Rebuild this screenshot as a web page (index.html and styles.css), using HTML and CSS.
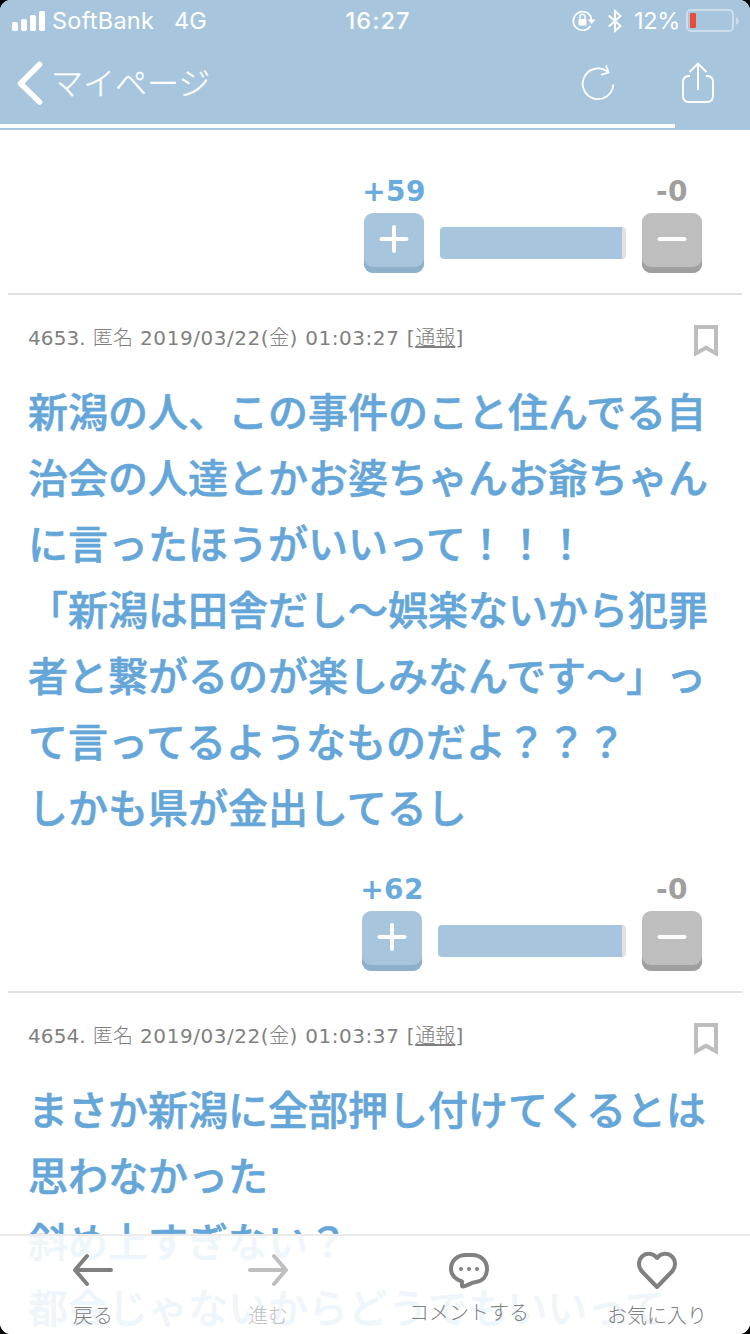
FILE: index.html
```html
<!DOCTYPE html>
<html lang="ja">
<head>
<meta charset="utf-8">
<title>マイページ</title>
<link rel="stylesheet" href="styles.css">
</head>
<body>
<div class="screen">
  <header class="header">
    <div class="status">
      <div class="status-left">
        <svg class="signal" width="34" height="20" viewBox="0 0 34 20" fill="#fff"><rect x="0" y="11" width="6" height="9" rx="1.7"/><rect x="9" y="8" width="6" height="12" rx="1.7"/><rect x="18" y="4" width="6" height="16" rx="1.7"/><rect x="27" y="0" width="6" height="20" rx="1.7"/></svg>
        <span class="carrier">SoftBank</span>
        <span class="network">4G</span>
      </div>
      <div class="clock">16:27</div>
      <div class="status-right">
        <svg class="lock" width="24" height="22" viewBox="0 0 24 22" fill="none" stroke="#fff"><path d="M18.600 15.700A9.300 9.300 0 1 1 18.600 6.200L19.500 10" stroke-width="1.700"/><path d="M15.700 9.500H23.500l-3.900 4.600z" fill="#fff" stroke="none"/><rect x="6.500" y="9" width="8" height="6.500" rx=".8" fill="#fff" stroke="none"/><path d="M8 9.500V6.800a2.500 2.500 0 0 1 5 0V9.500" stroke-width="1.400"/></svg>
        <svg class="bluetooth" width="14" height="24" viewBox="0 0 14 24" fill="none" stroke="#fff" stroke-width="1.900"><path d="M.8 6.500 12.500 17 7 22V2l5.500 5L.8 17.500"/></svg>
        <span class="percent">12%</span>
        <svg class="battery" width="53" height="24" viewBox="0 0 53 24"><rect x="1" y="1" width="46" height="21" rx="4" fill="none" stroke="#fff" stroke-opacity=".42" stroke-width="2"/><rect x="4" y="4" width="6" height="15" rx="1.200" fill="#ec4b3b"/><path d="M50 8q3 1.500 3 4t-3 4z" fill="#fff" fill-opacity=".42"/></svg>
      </div>
    </div>
    <nav class="nav">
      <svg class="back" width="26" height="44" viewBox="0 0 26 44" fill="none" stroke="#fff" stroke-width="5.500" stroke-linecap="round" stroke-linejoin="round"><path d="M22.500 3.500 3.500 22.500l19 18.500"/></svg>
      <span class="title">マイページ</span>
      <svg class="reload" width="34" height="38" viewBox="0 0 34 38" fill="none" stroke="#fff" stroke-width="1.800"><path d="M32.300 20.500a15.300 15.300 0 1 1-5.300-12.300"/><path d="M25 1.200l2.600 7.300-7.600 2.400"/></svg>
      <svg class="share" width="34" height="42" viewBox="0 0 34 42" fill="none" stroke="#fff" stroke-width="1.900"><path d="M9 14H7.500Q2 14.300 2 20v14q0 6 6 6h18q6 0 6-6V20q0-5.700-5.500-6H25M17 28V2M8.500 10 17 1.500 25.500 10"/></svg>
    </nav>
    <div class="progress"></div>
  </header>

  <main class="thread">
    <div class="votes">
      <div class="vote up">
        <span class="count">+59</span>
        <div class="button"><svg width="30" height="28" viewBox="0 0 30 28" stroke="#fff" stroke-width="4" stroke-linecap="round"><path d="M2.500 14h25M15 2v24"/></svg></div>
      </div>
      <div class="meter first"></div>
      <div class="vote down">
        <span class="count">-0</span>
        <div class="button"><svg width="30" height="28" viewBox="0 0 30 28" stroke="#fff" stroke-width="4" stroke-linecap="round"><path d="M2.500 14h25"/></svg></div>
      </div>
    </div>

    <article class="comment">
      <div class="meta">
        <p class="info">4653. <b>匿名</b> <span class="date">2019/03/22(</span><b>金</b><span class="date">) 01:03:27 [</span><a class="report">通報</a>]</p>
        <svg class="bookmark" width="24" height="32" viewBox="0 0 24 32" fill="none" stroke="#bdbdbd" stroke-width="4"><path d="M2 2h20v26.300l-10-5.500-10 5.500z"/></svg>
      </div>
      <p class="body">新潟の人、この事件のこと住んでる自<br>治会の人達とかお婆ちゃんお爺ちゃん<br>に言ったほうがいいって！！！<br>「新潟は田舎だし〜娯楽ないから犯罪<br>者と繋がるのが楽しみなんです〜」っ<br>て言ってるようなものだよ？？？<br>しかも県が金出してるし</p>
      <div class="votes">
        <div class="vote up">
          <span class="count">+62</span>
          <div class="button"><svg width="30" height="28" viewBox="0 0 30 28" stroke="#fff" stroke-width="4" stroke-linecap="round"><path d="M2.500 14h25M15 2v24"/></svg></div>
        </div>
        <div class="meter second"></div>
        <div class="vote down">
          <span class="count">-0</span>
          <div class="button"><svg width="30" height="28" viewBox="0 0 30 28" stroke="#fff" stroke-width="4" stroke-linecap="round"><path d="M2.500 14h25"/></svg></div>
        </div>
      </div>
    </article>

    <article class="comment">
      <div class="meta">
        <p class="info">4654. <b>匿名</b> <span class="date">2019/03/22(</span><b>金</b><span class="date">) 01:03:37 [</span><a class="report">通報</a>]</p>
        <svg class="bookmark" width="24" height="32" viewBox="0 0 24 32" fill="none" stroke="#bdbdbd" stroke-width="4"><path d="M2 2h20v26.300l-10-5.500-10 5.500z"/></svg>
      </div>
      <p class="body">まさか新潟に全部押し付けてくるとは<br>思わなかった<br>斜め上すぎない？<br>都会じゃないからどうでもいいって</p>
    </article>
  </main>

  <footer class="toolbar">
    <div class="tool arrow">
      <svg width="42" height="34" viewBox="0 0 42 34" fill="none" stroke="#808080" stroke-width="4" stroke-linecap="round" stroke-linejoin="round"><path d="M39 17H3M15 3 3 17l12 14"/></svg>
      <span>戻る</span>
    </div>
    <div class="tool arrow disabled">
      <svg width="42" height="34" viewBox="0 0 42 34" fill="none" stroke="#bfbfbf" stroke-width="4" stroke-linecap="round" stroke-linejoin="round"><path d="M3 17h36M27 3l12 14-12 14"/></svg>
      <span>進む</span>
    </div>
    <div class="tool post">
      <svg width="42" height="38" viewBox="0 0 42 38" fill="none" stroke="#808080" stroke-width="4" stroke-linecap="round" stroke-linejoin="round"><path d="M18 4h6c9 0 15 6 15 14 0 7-4 12-11 13-5 .5-7 3-13 4.500-1.500.2-1-1.500-1-5C7 28 3 24 3 18 3 10 9 4 18 4z"/><g fill="#808080" stroke="none"><circle cx="13" cy="18" r="2"/><circle cx="21" cy="18" r="2"/><circle cx="29" cy="18" r="2"/></g></svg>
      <span>コメントする</span>
    </div>
    <div class="tool">
      <svg width="42" height="38" viewBox="0 0 42 38" fill="none" stroke="#808080" stroke-width="4" stroke-linecap="round" stroke-linejoin="round"><path d="M21 7C17 1.500 10 1.500 6 5.500c-4 4-4 11 0 15L21 36l15-15.500c4-4 4-11 0-15-4-4-11-4-15 1.500z"/></svg>
      <span>お気に入り</span>
    </div>
  </footer>
</div>
</body>
</html>
```

FILE: styles.css
```css
* { box-sizing: border-box; }
body { margin: 0; background: #000; }
p { margin: 0; }
svg { display: block; flex: none; }

.screen {
  position: relative;
  width: 750px;
  height: 1334px;
  overflow: hidden;
  border-radius: 11px;
  background: #fff;
  font-family: "DejaVu Sans", "Noto Sans CJK JP", sans-serif;
}

.header {
  height: 130px;
  background: #a7c6de;
  color: #fff;
}
.status {
  display: grid;
  grid-template-columns: 1fr auto 1fr;
  align-items: center;
  height: 40px;
  padding: 1px 12px 0;
  font: 23.5px/39px Inter, sans-serif;
}
.status-left, .status-right { display: flex; align-items: center; }
.status-right { justify-content: flex-end; margin-right: -1px; }
.carrier { margin-left: 6px; letter-spacing: .25px; }
.network { margin-left: 20px; }
.clock { font-weight: 500; letter-spacing: 1.1px; padding-left: 6px; }
.bluetooth { margin-left: 12px; }
.percent { margin: 0 6px 0 12px; letter-spacing: -.3px; }

.nav {
  display: flex;
  align-items: center;
  height: 84px;
  padding: 2px 35px 0 17px;
}
.title {
  margin-left: 8px;
  padding-bottom: 4px;
  font: 300 32px/44px "Noto Sans CJK JP", sans-serif;
  -webkit-text-stroke: .3px;
}
.reload { margin-left: auto; margin-right: 66px; }
.progress { width: 675px; height: 4px; background: #fff; }

.thread { padding: 42px 8px 0; }
.votes {
  display: flex;
  justify-content: flex-end;
  align-items: flex-end;
  gap: 16px;
  height: 101px;
  padding-right: 40px;
}
.vote {
  display: flex;
  flex-direction: column;
  align-items: center;
  width: 60px;
}
.count {
  height: 41px;
  font-size: 28px;
  line-height: 40px;
  font-weight: 700;
  white-space: nowrap;
}
.button {
  display: flex;
  justify-content: center;
  width: 60px;
  height: 60px;
  padding-top: 12px;
  border-radius: 9px;
}
.up .count { color: #68abdc; letter-spacing: .3px; }
.up .button { background: #a7c6de; box-shadow: inset 0 -6px #8fb0ca; }
.down .count { color: #9f9f9f; letter-spacing: .5px; }
.down .button { background: #bebebe; box-shadow: inset 0 -6px #9f9f9f; }
.meter {
  height: 32px;
  margin-bottom: 14px;
  border-radius: 4px;
  border-right: 4px solid #e1e1e1;
  background: #a7c6de;
}
.meter.first { width: 186px; }
.meter.second { width: 188px; }

.comment {
  border-top: 2px solid #e1e1e1;
  padding-top: 29px;
}
.thread > .votes { margin-bottom: 20px; }
.comment .votes { margin: 31px 0 20px; }
.meta {
  display: flex;
  justify-content: space-between;
  height: 53px;
  padding: 0 24px 0 20px;
}
.bookmark { margin-top: 1px; }
.info {
  color: #808080;
  font-size: 20px;
  line-height: 28px;
  letter-spacing: .1px;
  word-spacing: .5px;
  white-space: nowrap;
}
.info b { font-weight: 300; letter-spacing: .2px; }
.date { letter-spacing: .55px; }
.report { font-weight: 300; text-decoration: underline; }
.body {
  padding-left: 20px;
  color: #65a6d9;
  font: 500 40px/66px "Noto Sans CJK JP", sans-serif;
  -webkit-text-stroke: .6px;
  white-space: nowrap;
}

.toolbar {
  position: absolute;
  inset: 1234px 0 0;
  display: grid;
  grid-template-columns: 186px 164px 238px 138px;
  border-top: 2px solid #ebebeb;
  background: rgba(255, 255, 255, .89);
  color: #808080;
  font: 300 20px/28px "Noto Sans CJK JP", sans-serif;
}
.tool {
  display: flex;
  flex-direction: column;
  align-items: center;
  justify-content: space-between;
  padding: 15px 0 5px;
  height: 98px;
}
.tool.arrow { padding-top: 17px; }
.tool.disabled { color: #bfbfbf; }
.tool.post { padding-bottom: 8px; }
```
